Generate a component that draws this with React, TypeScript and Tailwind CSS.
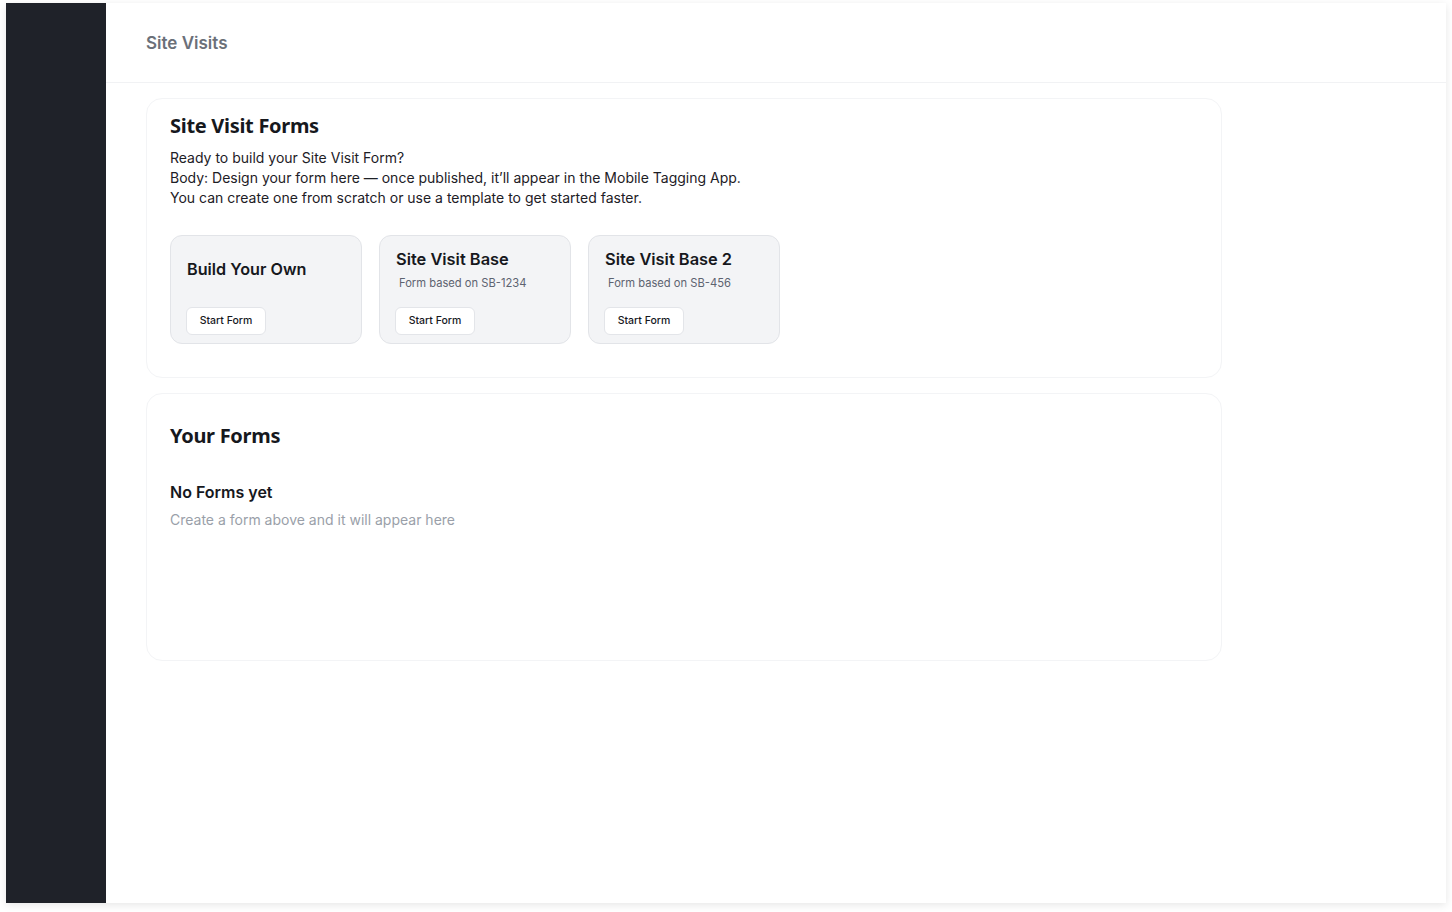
import React from "react";

const inter = { fontFamily: "Inter, 'Noto Sans', sans-serif" };

function TemplateCard({ title, sub }: { title: string; sub?: string }) {
  return (
    <div className="w-[192px] h-[109px] rounded-xl border border-[#e2e4e8] bg-[#f3f4f6] pl-4 pr-4 pt-[11px] pb-[8px] flex flex-col">
      {sub ? (
        <>
          <div className="text-[16.4px] leading-[24px] font-semibold text-[#16181d]">{title}</div>
          <div className="mt-[4px] ml-[3px] text-[11.2px] leading-[16px] text-[#5d6370]">{sub}</div>
        </>
      ) : (
        <div className="mt-[10px] text-[16.2px] leading-[24px] font-semibold text-[#16181d]">{title}</div>
      )}
      <div className="mt-auto">
        <button className="h-[28px] w-[80px] -ml-px rounded-md border border-[#e3e5e9] bg-white text-[10.5px] font-medium text-[#16181d]">
          Start Form
        </button>
      </div>
    </div>
  );
}

export default function App() {
  return (
    <div className="w-[1452px] h-[912px] bg-white" style={inter}>
      <div className="ml-[6px] pt-[3px]">
        <div className="flex w-[1440px] h-[900px] bg-white shadow-[0_2px_8px_rgba(0,0,0,0.10)]">
          <aside className="w-[100px] shrink-0 bg-[#1f2229]" />
          <main className="flex-1 flex flex-col">
            <header className="h-[80px] shrink-0 border-b border-[#f1f2f4] flex items-center pl-[40px] pt-[2px]">
              <h1 className="text-[17px] font-semibold text-[#6b7079]">Site Visits</h1>
            </header>
            <div className="pl-[40px] pt-[15px] flex flex-col gap-[15px]">
              <section className="w-[1076px] h-[280px] rounded-2xl border border-[#f3f4f6] px-[23px] pt-[13px]">
                <h2 className="text-[20px] leading-[28px] font-bold tracking-[-0.015em] text-[#16181d]" style={{ fontFamily: "'Noto Sans', Inter, sans-serif" }}>
                  Site Visit Forms
                </h2>
                <div className="mt-[8px] text-[14px] leading-[20px] text-[#1d2026]">
                  <p>Ready to build your Site Visit Form?</p>
                  <p>Body: Design your form here — once published, it’ll appear in the Mobile Tagging App.</p>
                  <p>You can create one from scratch or use a template to get started faster.</p>
                </div>
                <div className="mt-[27px] flex gap-[17px]">
                  <TemplateCard title="Build Your Own" />
                  <TemplateCard title="Site Visit Base" sub="Form based on SB-1234" />
                  <TemplateCard title="Site Visit Base 2" sub="Form based on SB-456" />
                </div>
              </section>
              <section className="w-[1076px] h-[268px] rounded-2xl border border-[#f3f4f6] px-[23px] pt-[28px]">
                <h2 className="text-[20px] leading-[28px] font-bold tracking-[-0.015em] text-[#16181d]" style={{ fontFamily: "'Noto Sans', Inter, sans-serif" }}>
                  Your Forms
                </h2>
                <div className="mt-[30px] text-[16px] leading-[24px] font-semibold text-[#16181d]">No Forms yet</div>
                <div className="mt-[6px] text-[14px] leading-[20px] text-[#9a9fa9]">Create a form above and it will appear here</div>
              </section>
            </div>
          </main>
        </div>
      </div>
    </div>
  );
}
